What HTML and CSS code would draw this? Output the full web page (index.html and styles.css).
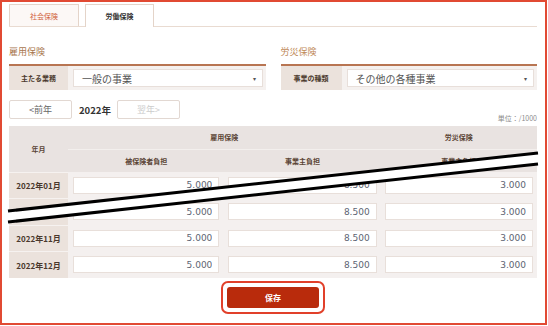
FILE: index.html
```html
<!DOCTYPE html>
<html lang="ja">
<head>
	<meta charset="UTF-8">
	<title>労働保険</title>
	<link rel="stylesheet" href="styles.css">
</head>
<body>
	<div class="frame">
		<div class="tabs">
			<div class="tab">社会保険</div>
			<div class="tab active">労働保険</div>
		</div>
		<div class="sections">
			<div class="section">
				<div class="section-title">雇用保険</div>
				<div class="field">
					<div class="field-label">主たる業務</div>
					<div class="select"><span>一般の事業</span><span class="arrow">▾</span></div>
				</div>
			</div>
			<div class="section right">
				<div class="section-title">労災保険</div>
				<div class="field">
					<div class="field-label">事業の種類</div>
					<div class="select"><span>その他の各種事業</span><span class="arrow">▾</span></div>
				</div>
			</div>
		</div>
		<div class="nav">
			<div class="btn">&lt;前年</div>
			<div class="year">2022年</div>
			<div class="btn disabled">翌年&gt;</div>
			<div class="unit">単位：/1000</div>
		</div>
		<table class="rates">
			<colgroup>
				<col class="c-month">
				<col>
				<col>
				<col>
			</colgroup>
			<thead>
				<tr class="head1">
					<th rowspan="2" class="th-month">年月</th>
					<th colspan="2" class="group">雇用保険</th>
					<th class="group">労災保険</th>
				</tr>
				<tr class="head2">
					<th>被保険者負担</th>
					<th>事業主負担</th>
					<th>事業主負担</th>
				</tr>
			</thead>
			<tbody>
				<tr>
					<td class="month">2022年01月</td>
					<td class="val first"><input class="num" value="5.000" readonly></td>
					<td class="val"><input class="num" value="8.500" readonly></td>
					<td class="val"><input class="num" value="3.000" readonly></td>
				</tr>
				<tr>
					<td class="month">2022年02月</td>
					<td class="val first"><input class="num" value="5.000" readonly></td>
					<td class="val"><input class="num" value="8.500" readonly></td>
					<td class="val"><input class="num" value="3.000" readonly></td>
				</tr>
				<tr>
					<td class="month">2022年11月</td>
					<td class="val first"><input class="num" value="5.000" readonly></td>
					<td class="val"><input class="num" value="8.500" readonly></td>
					<td class="val"><input class="num" value="3.000" readonly></td>
				</tr>
				<tr>
					<td class="month">2022年12月</td>
					<td class="val first"><input class="num" value="5.000" readonly></td>
					<td class="val"><input class="num" value="8.500" readonly></td>
					<td class="val"><input class="num" value="3.000" readonly></td>
				</tr>
			</tbody>
		</table>
		<div class="actions">
			<div class="save-ring">
				<button class="save">保存</button>
			</div>
		</div>
	</div>
	<!-- 省略線 -->
	<svg class="break" width="548" height="326" viewBox="0 0 548 326">
		<polygon points="8,211 538,153 538,164 8,222" fill="#fff"/>
		<line x1="8" y1="211" x2="538" y2="153" stroke="#000" stroke-width="3"/>
		<line x1="8" y1="222" x2="538" y2="164" stroke="#000" stroke-width="3"/>
	</svg>
</body>
</html>
```
FILE: styles.css
```css
*{
	margin: 0;
	padding: 0;
	box-sizing: border-box;
}
body{
	font-family: "Noto Sans CJK JP", sans-serif;
	background: #fff;
	position: relative;
}
.frame{
	width: 547px;
	height: 325px;
	border: 2px solid #e14a33;
	padding: 2px 8px 0 7px;
}
.tabs{
	display: flex;
	align-items: flex-start;
	gap: 6px;
	height: 23px;
	border-bottom: 1px solid #e9dbd1;
}
.tab{
	width: 70px;
	height: 22px;
	border: 1px solid #e4d4c9;
	border-bottom: none;
	background: #fcf8f6;
	color: #d0603a;
	font-size: 7px;
	display: flex;
	align-items: center;
	justify-content: center;
}
.tab.active{
	width: 69px;
	height: 23px;
	background: #fff;
	color: #333;
	font-weight: bold;
}
.sections{
	display: flex;
	gap: 15px;
}
.section{
	flex: 1;
}
.section-title{
	font-size: 9px;
	line-height: 12px;
	padding: 19px 0 6px;
	border-bottom: 2px solid #b87552;
	color: #a8764e;
}
.right .section-title{
	color: #c08a58;
}
.field{
	display: flex;
	height: 24px;
	background: #f5f1ef;
}
.field-label{
	width: 59px;
	background: #ebe2dc;
	color: #4c3a2e;
	font-size: 7px;
	font-weight: bold;
	display: flex;
	align-items: center;
	justify-content: center;
}
.right .field-label{
	width: 61px;
}
.select{
	flex: 1;
	margin: 3px 3px 3px 5px;
	background: #fff;
	border: 1px solid #e8dfda;
	display: flex;
	align-items: center;
	justify-content: space-between;
	padding: 0 6px 0 8px;
	font-size: 10px;
	color: #555;
}
.arrow{
	font-size: 6px;
	color: #555;
}
.nav{
	display: flex;
	align-items: center;
	height: 19px;
	margin-top: 10px;
}
.btn{
	width: 63px;
	height: 19px;
	border: 1px solid #e2d8d2;
	border-radius: 2px;
	background: #fff;
	color: #666;
	font-size: 9px;
	display: flex;
	align-items: center;
	justify-content: center;
}
.btn.disabled{
	color: #ccc;
}
.year{
	margin: 0 6px 0 7px;
	white-space: nowrap;
	font-size: 9.5px;
	font-weight: bold;
	color: #333;
}
.unit{
	margin-left: auto;
	align-self: flex-end;
	margin-bottom: -4px;
	font-size: 7px;
	color: #8c8c8c;
}
.rates{
	width: 528px;
	margin-top: 7px;
	border-collapse: collapse;
	table-layout: fixed;
}
.c-month{
	width: 59px;
}
.rates th{
	background: #e9e3e1;
	color: #5b4536;
	font-size: 7px;
	font-weight: bold;
}
.head1 th{
	height: 23px;
}
.head2 th{
	height: 23px;
}
.rates th.group{
	border-bottom: 1px solid #f3efed;
}
.rates td{
	height: 26.5px;
}
.month{
	background: #ebe2dc;
	color: #4a382c;
	font-size: 8px;
	font-weight: bold;
	text-align: center;
	border-top: 1px solid #f6f2f0;
}
.val{
	background: #f4f0ef;
	padding: 0 4px;
}
.val.first{
	padding: 0 5px;
}
.num{
	display: block;
	width: 100%;
	height: 17px;
	border: 1px solid #e8dfda;
	background: #fff;
	text-align: right;
	padding: 0 6px 0 0;
	font-family: "DejaVu Sans", sans-serif;
	font-size: 9px;
	color: #5d6472;
	outline: none;
}
.actions{
	display: flex;
	justify-content: center;
	margin-top: 3px;
}
.save-ring{
	border: 2px solid #e1402a;
	border-radius: 7px;
	padding: 4px;
}
.save{
	display: block;
	width: 92px;
	height: 21px;
	border: none;
	border-radius: 3px;
	background: #b92b0c;
	color: #fff;
	font-family: "Noto Sans CJK JP", sans-serif;
	font-size: 8px;
	font-weight: bold;
}
.break{
	position: absolute;
	left: 0;
	top: 0;
	pointer-events: none;
}
```
